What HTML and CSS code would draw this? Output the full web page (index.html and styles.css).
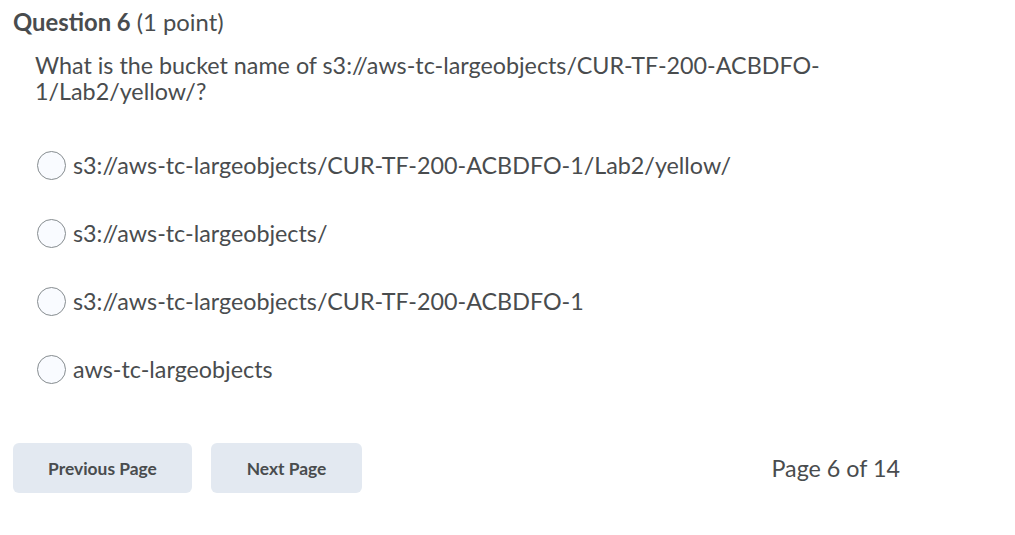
FILE: index.html
```html
<!DOCTYPE html>
<html>
<head>
<meta charset="utf-8">
<link rel="stylesheet" href="styles.css">
</head>
<body>
<div class="page">
  <h2 class="qtitle"><strong>Question 6</strong> (1 point)</h2>
  <div class="qbody">
    <p class="qtext">What is the bucket name of s3://aws-tc-largeobjects/CUR-TF-200-ACBDFO-1/Lab2/yellow/?</p>
    <ul class="options">
      <li class="option"><span class="radio"></span><span class="label">s3://aws-tc-largeobjects/CUR-TF-200-ACBDFO-1/Lab2/yellow/</span></li>
      <li class="option"><span class="radio"></span><span class="label">s3://aws-tc-largeobjects/</span></li>
      <li class="option"><span class="radio"></span><span class="label">s3://aws-tc-largeobjects/CUR-TF-200-ACBDFO-1</span></li>
      <li class="option"><span class="radio"></span><span class="label">aws-tc-largeobjects</span></li>
    </ul>
  </div>
  <div class="footer">
    <div class="buttons">
      <button class="btn btn-prev">Previous Page</button>
      <button class="btn btn-next">Next Page</button>
    </div>
    <div class="pageinfo">Page 6 of 14</div>
  </div>
</div>
</body>
</html>
```
FILE: styles.css
```css
html, body {
  margin: 0;
  padding: 0;
  background: #ffffff;
}
body {
  font-family: Lato, "Liberation Sans", sans-serif;
  color: #494c4e;
}
.page {
  width: 887px;
  padding: 7px 0 0 13px;
}
.qtitle {
  margin: 0;
  font-size: 23.8px;
  font-weight: 400;
  line-height: 30px;
}
.qtitle strong {
  font-weight: 700;
}
.qbody {
  padding-left: 22px;
}
.qtext {
  margin: 14.5px 0 0 0;
  font-size: 23.3px;
  line-height: 26px;
}
.options {
  list-style: none;
  margin: 46.5px 0 0 0;
  padding: 0;
}
.option {
  display: flex;
  align-items: center;
  gap: 7px;
  height: 30px;
  margin-bottom: 38px;
  font-size: 23.3px;
}
.option:last-child {
  margin-bottom: 0;
}
.radio {
  width: 27px;
  height: 27px;
  border: 1px solid #868c8f;
  border-radius: 50%;
  background: #f9fbff;
  margin-left: 2px;
  flex: none;
}
.footer {
  display: flex;
  align-items: center;
  justify-content: space-between;
  margin-top: 59px;
}
.buttons {
  display: flex;
  gap: 19px;
}
.btn {
  font-family: Lato, "Liberation Sans", sans-serif;
  font-size: 17.4px;
  font-weight: 700;
  color: #494c4e;
  background: #e3e9f1;
  border: none;
  border-radius: 6px;
  height: 50px;
  padding: 0;
}
.btn-prev { width: 179px; }
.btn-next { width: 151px; }
.pageinfo {
  font-size: 23.3px;
}
```
